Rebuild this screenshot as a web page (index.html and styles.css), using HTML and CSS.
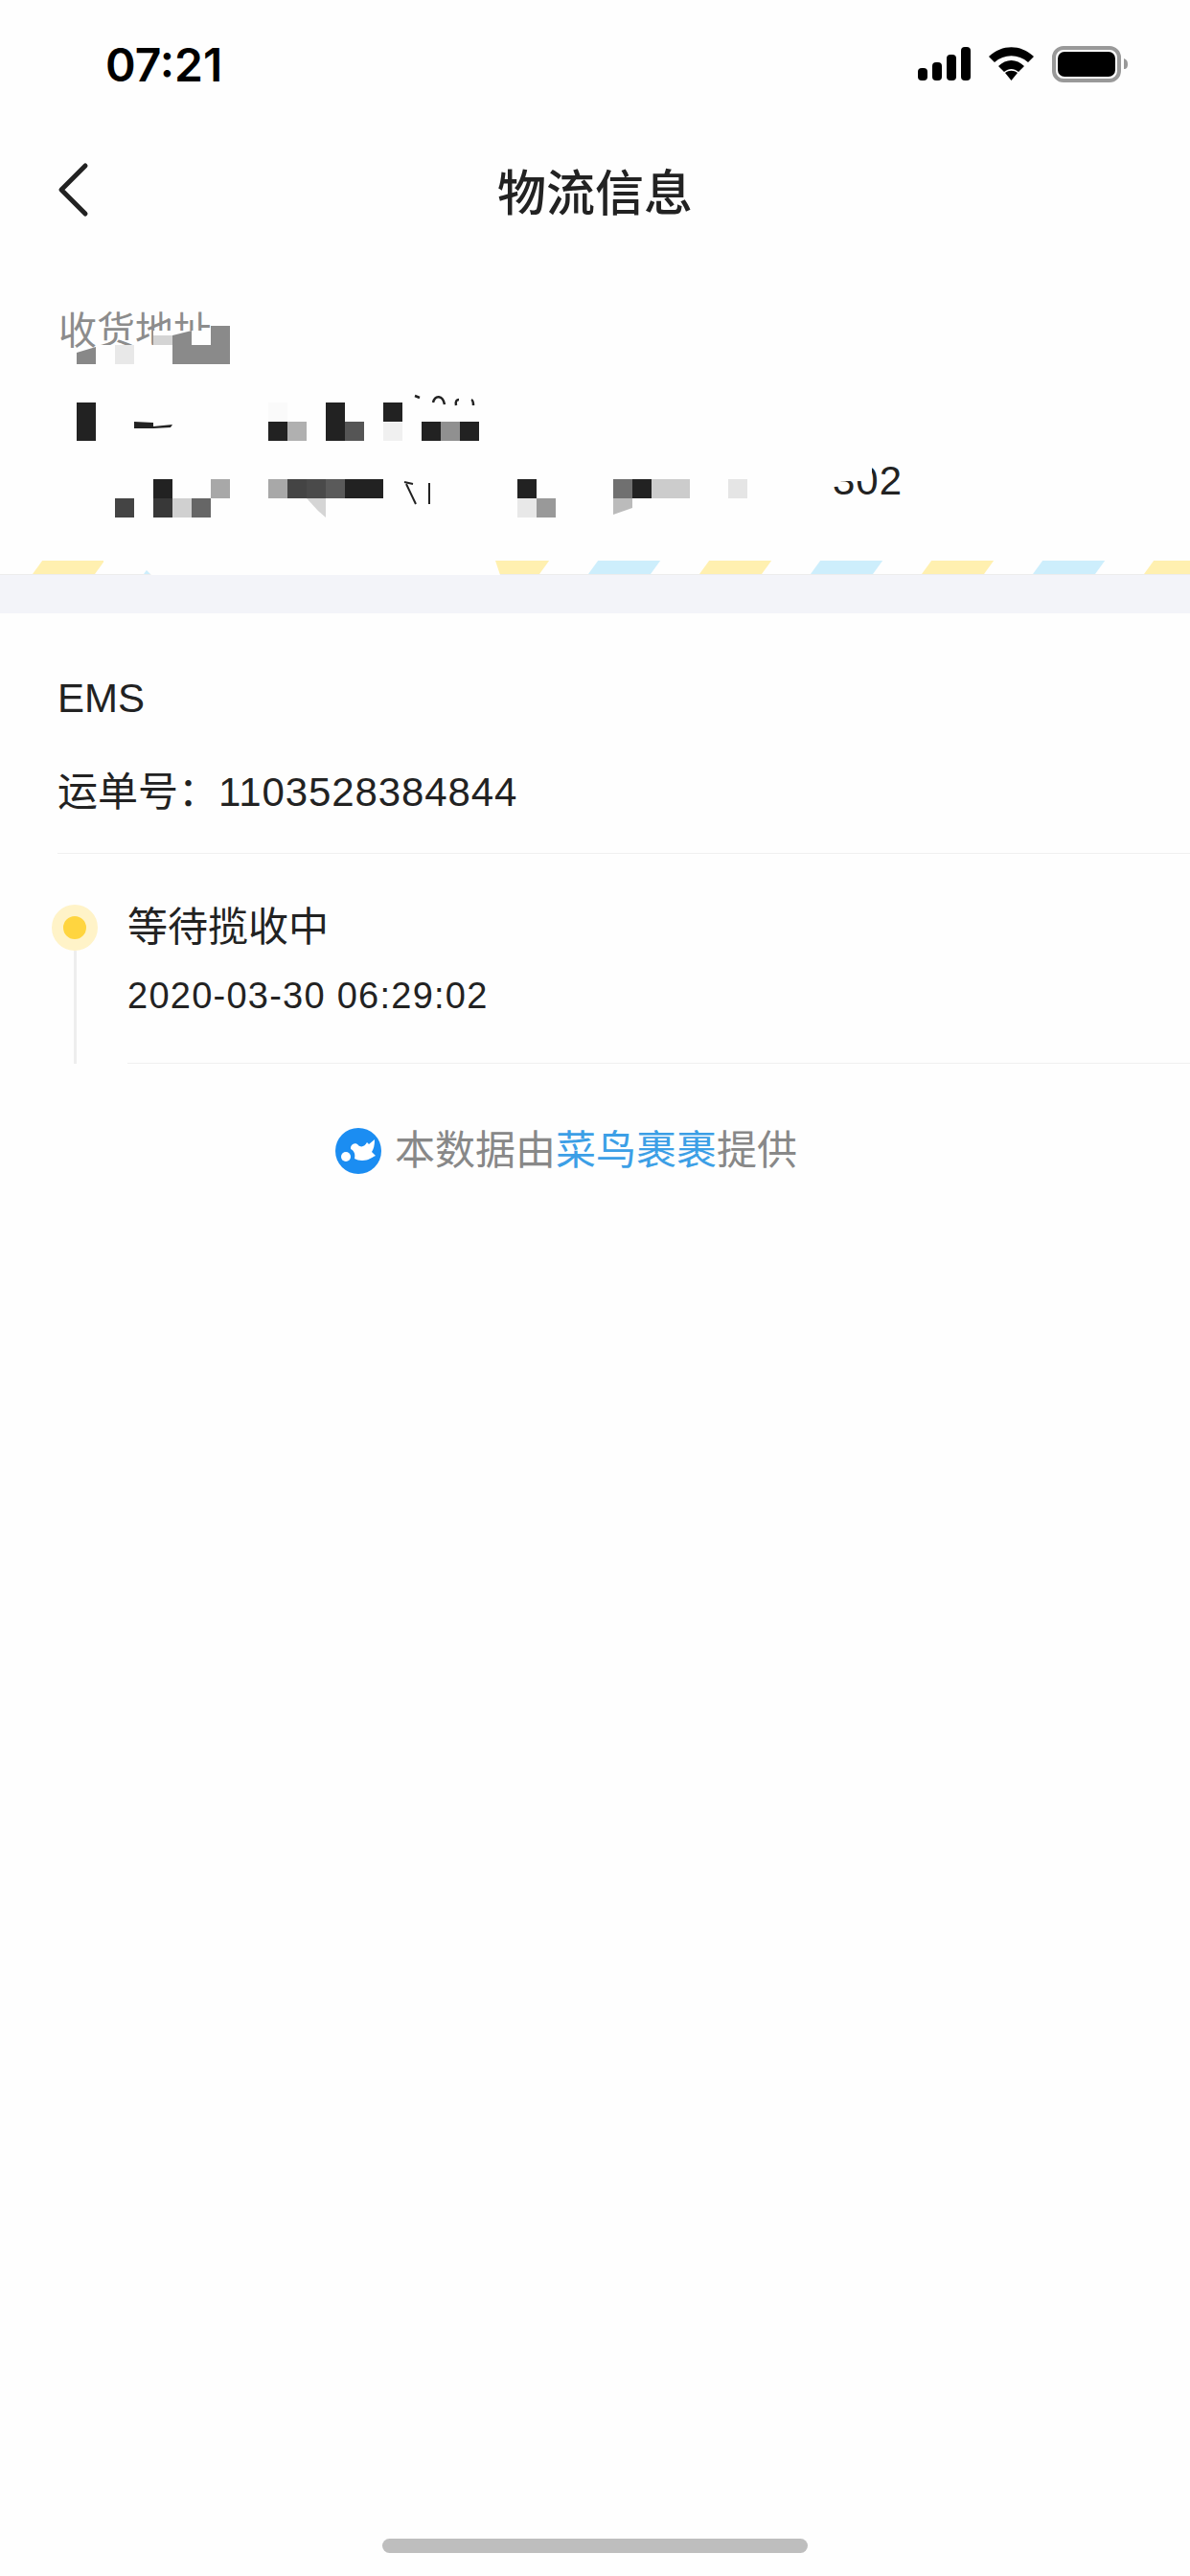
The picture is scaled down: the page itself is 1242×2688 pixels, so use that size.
FILE: index.html
```html
<!DOCTYPE html>
<html lang="zh-CN">
<head>
    <meta charset="UTF-8">
    <meta name="viewport" content="width=device-width, initial-scale=1.0">
    <title>物流信息</title>
    <link rel="stylesheet" href="styles.css">
</head>
<body>

<div class="page">

    <div class="status-bar">
        <span class="clock">07:21</span>
        <svg class="status-icons" width="220" height="38" viewBox="0 0 220 38">
            <!-- signal -->
            <rect x="0" y="23" width="10" height="13" rx="4" fill="#000"/>
            <rect x="15" y="17" width="10" height="19" rx="4" fill="#000"/>
            <rect x="30" y="9" width="10" height="27" rx="4" fill="#000"/>
            <rect x="45" y="1" width="10" height="35" rx="4" fill="#000"/>
            <!-- wifi -->
            <path d="M74 11 C88 -2 107 -2 121 11 L115 17 C105 8 90 8 80 17 Z" fill="#000"/>
            <path d="M84 21 C92 13 103 13 111 21 L105 27 C100 23 95 23 90 27 Z" fill="#000"/>
            <path d="M91 28 C95 25 100 25 104 28 L97.5 36 Z" fill="#000"/>
            <!-- battery -->
            <rect x="142" y="2" width="68" height="34" rx="10" fill="none" stroke="#999" stroke-width="4"/>
            <rect x="146" y="6" width="60" height="26" rx="7" fill="#000"/>
            <path d="M215 13 C218 14 219 16 219 19 C219 22 218 24 215 24 Z" fill="#999"/>
        </svg>
    </div>

    <div class="nav-bar">
        <svg class="back-icon" width="36" height="58" viewBox="0 0 36 58">
            <path d="M31 4 L6 29 L31 54" fill="none" stroke="#222" stroke-width="5" stroke-linecap="round" stroke-linejoin="round"/>
        </svg>
        <h1 class="nav-title">物流信息</h1>
        <span></span>
    </div>

    <div class="address">
        <div class="address-label">收货地址</div>
        <div class="address-line">302</div>

        <!-- mosaic over the private address, coordinates are page pixels -->
        <svg class="mosaic" width="1242" height="338" viewBox="0 262 1242 338">
            <!-- white smudges -->
            <rect x="100" y="360" width="140" height="20" fill="#fefefe"/>
            <rect x="160" y="345" width="80" height="15" fill="#fefefe"/>
            <rect x="860" y="480" width="50" height="22" fill="#fefefe"/>
            <polygon points="108,585 517,585 522,600 158,600 152,594 108,594" fill="#fefefe"/>

            <!-- label row -->
            <polygon points="80,368 100,362 100,380 80,380" fill="#888"/>
            <rect x="120" y="360" width="20" height="20" fill="#e8e8e8"/>
            <rect x="160" y="350" width="20" height="10" fill="#d4d4d4"/>
            <polygon points="180,350 200,345 200,380 180,380" fill="#8a8a8a"/>
            <rect x="200" y="360" width="20" height="20" fill="#8a8a8a"/>
            <rect x="220" y="340" width="20" height="40" fill="#8a8a8a"/>

            <!-- first line -->
            <rect x="80" y="420" width="20" height="40" fill="#222"/>
            <polygon points="140,440 160,441 160,445 180,443 178,446 160,447 140,447" fill="#222"/>
            <rect x="280" y="420" width="20" height="20" fill="#fafafa"/>
            <rect x="280" y="440" width="20" height="20" fill="#222"/>
            <rect x="300" y="440" width="20" height="20" fill="#b0b0b0"/>
            <rect x="340" y="420" width="20" height="40" fill="#222"/>
            <rect x="360" y="440" width="20" height="20" fill="#555"/>
            <rect x="400" y="420" width="20" height="20" fill="#222"/>
            <rect x="400" y="440" width="20" height="20" fill="#f0f0f0"/>
            <rect x="440" y="440" width="20" height="20" fill="#222"/>
            <rect x="460" y="440" width="20" height="20" fill="#909090"/>
            <rect x="480" y="440" width="20" height="20" fill="#222"/>
            <path d="M433 413 L438 415 M452 420 C454 412 462 412 464 422 M476 423 C475 418 477 417 479 417 M492 417 C494 418 494 421 494 423" fill="none" stroke="#222" stroke-width="2.5"/>

            <!-- second line -->
            <rect x="120" y="520" width="20" height="20" fill="#444"/>
            <rect x="160" y="500" width="20" height="20" fill="#222"/>
            <rect x="160" y="520" width="20" height="20" fill="#383838"/>
            <rect x="180" y="520" width="20" height="20" fill="#d0d0d0"/>
            <rect x="200" y="520" width="20" height="20" fill="#666"/>
            <rect x="220" y="500" width="20" height="20" fill="#a8a8a8"/>
            <rect x="280" y="500" width="20" height="20" fill="#a8a8a8"/>
            <rect x="300" y="500" width="20" height="20" fill="#444"/>
            <rect x="320" y="500" width="20" height="20" fill="#4a4a4a"/>
            <rect x="340" y="500" width="20" height="20" fill="#5a5a5a"/>
            <rect x="360" y="500" width="40" height="20" fill="#222"/>
            <polygon points="320,520 340,520 340,540 332,533" fill="#d5d5d5"/>
            <path d="M422 503 L431 505 M424 505 L434 526 M448 504 L448 526" fill="none" stroke="#222" stroke-width="2"/>
            <rect x="540" y="500" width="20" height="20" fill="#222"/>
            <rect x="540" y="520" width="20" height="20" fill="#e8e8e8"/>
            <rect x="560" y="520" width="20" height="20" fill="#999"/>
            <rect x="640" y="500" width="20" height="20" fill="#707070"/>
            <rect x="660" y="500" width="20" height="20" fill="#222"/>
            <rect x="680" y="500" width="40" height="20" fill="#ccc"/>
            <polygon points="640,520 660,520 660,530 640,537" fill="#bbb"/>
            <rect x="760" y="500" width="20" height="20" fill="#e5e5e5"/>
        </svg>
    </div>

    <div class="stripes">
        <span></span><span></span><span></span><span></span><span></span><span></span>
        <span></span><span></span><span></span><span></span><span></span>
    </div>
    <div class="band"></div>

    <div class="waybill">
        <div class="waybill-inner">
            <div class="carrier">EMS</div>
            <div class="waybill-no">运单号：<span class="digits">1103528384844</span></div>
        </div>
    </div>

    <div class="track-row">
        <div class="track-node">
            <div class="track-dot"></div>
            <div class="track-line"></div>
        </div>
        <div class="track-body">
            <div class="track-title">等待揽收中</div>
            <div class="track-time">2020-03-30 06:29:02</div>
        </div>
    </div>

    <div class="source">
        <svg class="source-logo" width="48" height="48" viewBox="0 0 48 48">
            <circle cx="24" cy="24" r="24" fill="#1b8df2"/>
            <circle cx="11" cy="30" r="5" fill="#fff"/>
            <path d="M16 20 C17 16 22 15 24 18 C27 21 31 19 33 15 L35 17 L41 12 C41 18 40 22 38 25 L42 29 C37 31 35 34 28 34 C25 34 22 33 20 32 C21 28 20 24 16 22 Z" fill="#fff"/>
        </svg>
        <span class="source-text">本数据由<span class="source-link">菜鸟裹裹</span>提供</span>
    </div>

    <div class="home-bar"></div>

</div>

</body>
</html>
```

FILE: styles.css
```css
* {
    box-sizing: border-box;
}

body {
    margin: 0;
    background-color: #fefefe;
    font-family: "Liberation Sans", "Noto Sans CJK SC", sans-serif;
    color: #222;
}

.page {
    display: flex;
    flex-direction: column;
    width: 1242px;
    height: 2688px;
    overflow: hidden;
}

/* Top of the screen */
.status-bar {
    display: flex;
    justify-content: space-between;
    align-items: center;
    height: 134px;
    padding: 0 64px 0 110px;
}

.clock {
    font-family: Inter, "Liberation Sans", sans-serif;
    font-size: 48px;
    font-weight: 600;
    color: #000;
}

.nav-bar {
    display: grid;
    grid-template-columns: 1fr auto 1fr;
    align-items: center;
    height: 128px;
    padding: 0 58px;
}

.nav-title {
    margin: 0;
    font-size: 51px;
    font-weight: 500;
}

/* Address block */
.address {
    position: relative;
    height: 323px;
    padding-top: 55px;
}

.address-label {
    padding-left: 61px;
    font-size: 40px;
    line-height: 56px;
    color: #8c8c8c;
}

.address-line {
    margin-top: 101px;
    padding-left: 869px;
    font-size: 42px;
    line-height: 56px;
    letter-spacing: 1px;
}

.mosaic {
    position: absolute;
    top: 0;
    left: 0;
    z-index: 1;
}

.stripes {
    display: flex;
    gap: 51px;
    height: 15px;
    padding-left: 34px;
    overflow: hidden;
    border-bottom: 1px solid #ececec;
}

.stripes span {
    flex: none;
    width: 65px;
    background-color: #fff0b0;
    transform: skewX(-36deg);
    transform-origin: bottom left;
}

.stripes span:nth-child(even) {
    background-color: #cdeefc;
}

.band {
    height: 40px;
    background-color: #f3f4f9;
}

/* Waybill */
.waybill {
    padding: 61px 0 0 60px;
}

.waybill-inner {
    padding-bottom: 35px;
    border-bottom: 1px solid #f0f0f0;
}

.carrier {
    font-size: 42px;
    line-height: 56px;
}

.waybill-no {
    margin-top: 42px;
    font-size: 42px;
    line-height: 56px;
}

.digits {
    letter-spacing: 0.9px;
}

/* Tracking timeline */
.track-row {
    display: flex;
    height: 219px;
    padding-left: 54px;
}

.track-node {
    display: flex;
    flex-direction: column;
    align-items: center;
    width: 48px;
    margin-right: 31px;
    padding-top: 53px;
}

.track-dot {
    flex: none;
    width: 48px;
    height: 48px;
    border: 12px solid #fff3c8;
    border-radius: 50%;
    background-color: #ffd53f;
}

.track-line {
    flex: 1;
    width: 3px;
    background-color: #eee;
}

.track-body {
    flex: 1;
    padding-top: 49px;
    border-bottom: 1px solid #f0f0f0;
}

.track-title {
    font-size: 42px;
    line-height: 56px;
}

.track-time {
    margin-top: 18px;
    font-size: 38px;
    line-height: 50px;
    letter-spacing: 1.25px;
}

/* Data source note */
.source {
    display: flex;
    justify-content: center;
    align-items: center;
    gap: 14px;
    margin-top: 67px;
    padding-right: 60px;
}

.source-text {
    font-size: 42px;
    line-height: 48px;
    color: #888;
}

.source-link {
    color: #3c9fe6;
}

.home-bar {
    align-self: center;
    width: 444px;
    height: 15px;
    margin-top: auto;
    margin-bottom: 24px;
    border-radius: 8px;
    background-color: #bebebe;
}
```
